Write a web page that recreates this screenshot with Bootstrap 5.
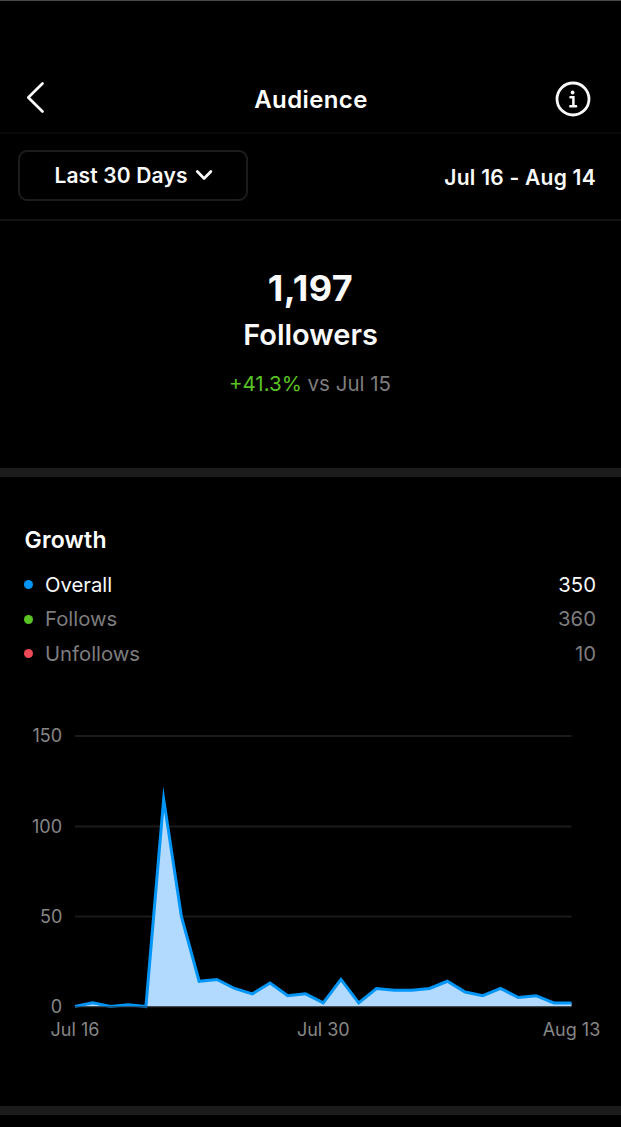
<!DOCTYPE html>
<html lang="en" data-bs-theme="dark">
<head>
<meta charset="utf-8">
<meta name="viewport" content="width=device-width, initial-scale=1">
<title>Audience</title>
<link href="https://cdn.jsdelivr.net/npm/bootstrap@5.3.0/dist/css/bootstrap.min.css" rel="stylesheet">
<style>
body{background:#000;color:#fafafa;font-family:Inter,"Liberation Sans",sans-serif;height:1127px;overflow:hidden;line-height:1}
.topbar{height:134px;border-top:1px solid #484848;border-bottom:2px solid #090909;padding:65px 30px 0 26px}
.topbar h1{font-size:24px;font-weight:600;letter-spacing:.4px;line-height:1;padding:2px 0 0 5px}
.side{flex:1 1 0}
.back{margin-bottom:3px}
.filters{height:87px;border-bottom:2px solid #131313;padding:0 25px 0 18px}
.range-btn{width:230px;height:51px;margin-bottom:2px;border:2px solid #1c1c1c;border-radius:9px;color:#fafafa;font-size:21px;font-weight:600;letter-spacing:.15px;line-height:1}
.range-text{font-size:21px;font-weight:600;letter-spacing:.25px;padding-top:2px}
.summary{height:247px;padding-top:49px}
.total{font-size:36px;font-weight:700;line-height:36px;letter-spacing:.4px}
.total-label{font-size:29px;font-weight:600;line-height:30px;margin-top:14px}
.delta{font-size:20.5px;line-height:22px;color:#7d7d7d;margin-top:23px;padding-right:1px}
.up{color:#58c322}
.divider{height:9px;background:#1c1c1c}
.growth{height:629px;padding:51px 25px 0 24px}
.growth h2{font-size:23px;font-weight:600;line-height:24px;letter-spacing:.2px;padding-left:.5px}
.legend-list{padding-top:15.5px}
.legend-row{height:34.6px;font-size:20.3px}
.muted{color:#7d7d7d}
.dot{width:9px;height:9px;margin-right:12px;border-radius:50%}
.dot-blue{background:#0095f6}
.dot-green{background:#58c322}
.dot-red{background:#ed4956}
.plot{margin:53.7px -25px 0 0;font-size:18px}
.plot text{fill:#868686}
</style>
</head>
<body class="d-flex flex-column">
<header class="topbar d-flex align-items-center flex-shrink-0">
  <div class="side"><svg class="back d-block" width="19" height="33" viewBox="0 0 19 33" fill="none" stroke="#fafafa" stroke-width="2.7" stroke-linecap="round" stroke-linejoin="round"><path d="M16.5 2.5 2.3 16.5l14.2 14"/></svg></div>
  <h1 class="m-0">Audience</h1>
  <div class="side"><svg class="d-block ms-auto" width="36" height="36" viewBox="0 0 36 36" fill="none" stroke="#fafafa"><circle cx="18" cy="18" r="16" stroke-width="2.8"/><circle cx="17.6" cy="11.5" r="1.9" fill="#fafafa" stroke="none"/><path d="M15.5 16.2h2.9v9M15.3 25.2h5.8" stroke-width="2.5" stroke-linecap="round"/></svg></div>
</header>
<section class="filters d-flex align-items-center justify-content-between flex-shrink-0">
  <button class="btn range-btn d-flex align-items-center justify-content-center p-0">Last 30 Days
    <svg class="ms-2" width="16" height="13" viewBox="0 0 16 13" fill="none" stroke="#fafafa" stroke-width="2.7" stroke-linecap="round" stroke-linejoin="round" overflow="visible"><path d="M1.3 2.5l6.8 7 6.8-7"/></svg>
  </button>
  <div class="range-text">Jul 16 - Aug 14</div>
</section>
<section class="summary text-center flex-shrink-0">
  <div class="total">1,197</div>
  <div class="total-label">Followers</div>
  <div class="delta"><span class="up">+41.3%</span> vs Jul 15</div>
</section>
<div class="divider flex-shrink-0"></div>
<section class="growth flex-shrink-0">
  <h2 class="m-0">Growth</h2>
  <div class="legend-list">
    <div class="legend-row d-flex align-items-center"><i class="dot dot-blue"></i><span>Overall</span><span class="ms-auto">350</span></div>
    <div class="legend-row d-flex align-items-center muted"><i class="dot dot-green"></i><span>Follows</span><span class="ms-auto">360</span></div>
    <div class="legend-row d-flex align-items-center muted"><i class="dot dot-red"></i><span>Unfollows</span><span class="ms-auto">10</span></div>
  </div>
  <svg class="plot d-block" width="597" height="320" viewBox="24 725 597 320">
    <path d="M75 736H571.5M75 826.4H571.5M75 916.4H571.5" stroke="#1b1b1b" stroke-width="2"/>
    <path id="area" fill="#b2dafe"/>
    <path id="line" fill="none" stroke="#0095f6" stroke-width="3" stroke-miterlimit="12"/>
    <path d="M75 1007H571.5" stroke="#262626" stroke-opacity=".65" stroke-width="1.6"/>
    <g text-anchor="end">
      <text x="62" y="742.3">150</text><text x="62" y="832.5">100</text><text x="62.3" y="922.8">50</text><text x="62" y="1013">0</text>
    </g>
    <g text-anchor="middle">
      <text x="75" y="1035.7">Jul 16</text><text x="323.3" y="1035.7">Jul 30</text><text x="571.5" y="1035.7">Aug 13</text>
    </g>
  </svg>
</section>
<div class="divider flex-shrink-0"></div>
<script src="https://cdn.jsdelivr.net/npm/bootstrap@5.3.0/dist/js/bootstrap.bundle.min.js"></script>
<script>
const growth = [0,2,0,1,0,115,50,14,15,10,7,13,6,7,2,15,2,10,9,9,10,14,8,6,10,5,6,2,2];
const points = growth.map((v, i) => (75 + i * 496.5 / 28).toFixed(2) + ' ' + (1006.5 - v * 1.803).toFixed(2));
document.getElementById('line').setAttribute('d', 'M' + points.join('L'));
document.getElementById('area').setAttribute('d', 'M75 1006.5L' + points.join('L') + 'L571.5 1006.5Z');
</script>
</body>
</html>
